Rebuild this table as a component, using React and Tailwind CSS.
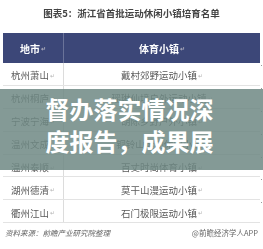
const rows = [
  ['杭州萧山', '戴村郊野运动小镇'],
  ['杭州桐庐', '瑶琳仙境户外运动小镇'],
  ['宁波宁海', '胡陈乡野户外小镇'],
  ['温州文成', '铜铃山运动休闲小镇'],
  ['温州泰顺', '百丈时尚体育小镇'],
  ['湖州德清', '莫干山漫运动小镇'],
  ['衢州江山', '石门极限运动小镇'],
]

function Mark() {
  return <span className="text-[6px] text-[#b5b5b5] ml-[1px] align-baseline">↵</span>
}

export default function App() {
  return (
    <div className="relative w-[263px] h-[249px] bg-white overflow-hidden font-['Noto_Sans_CJK_SC',sans-serif]">
      {/* Background table */}
      <div className="blur-[0.3px]">
        <p className="pt-[7px] h-[33px] text-center text-[9.5px] font-bold text-[#444] leading-[13px]">
          图表5：浙江省首批运动休闲小镇培育名单
        </p>

        <div className="ml-[3px] w-[257px]">
          {/* Header */}
          <div className="flex h-[30px] bg-[#3c4778] text-white text-[10px] font-bold">
            <div className="w-[61px] flex items-center justify-center border-r border-[#6a7399]">
              地市<span className="text-[6px] text-[#aab] ml-[1px]">↵</span>
            </div>
            <div className="flex-1 flex items-center justify-center">
              体育小镇<span className="text-[6px] text-[#aab] ml-[1px]">↵</span>
            </div>
          </div>

          {/* Rows */}
          {rows.map(([city, town]) => (
            <div key={city} className="relative flex h-[22.9px] border-b border-[#e3e3e3] text-[9.5px] text-[#5a5a5a]">
              <div className="w-[61px] flex items-center justify-center pt-[3px] border-r border-[#dcdcdc]">
                {city}<Mark />
              </div>
              <div className="flex-1 flex items-center justify-center pt-[3px]">
                {town}<Mark />
              </div>
              <span className="absolute -right-[2px] top-[2px] w-[1px] h-[1px] bg-[#999]" />
            </div>
          ))}
        </div>

        {/* Footer */}
        <div className="flex justify-between items-center px-[5px] mt-[4px] text-[7.5px] text-[#666]">
          <span className="italic">资料来源：前瞻产业研究院整理</span>
          <span>@前瞻经济学人APP</span>
        </div>
      </div>

      {/* Title overlay band */}
      <div className="absolute left-0 right-0 top-[89px] h-[81px] bg-[#6e8884]/85">
        <p className="mx-auto mt-[4px] w-[172px] text-white text-[24px] font-bold leading-[32px]">
          督办落实情况深度报告，成果展
        </p>
      </div>
    </div>
  )
}
